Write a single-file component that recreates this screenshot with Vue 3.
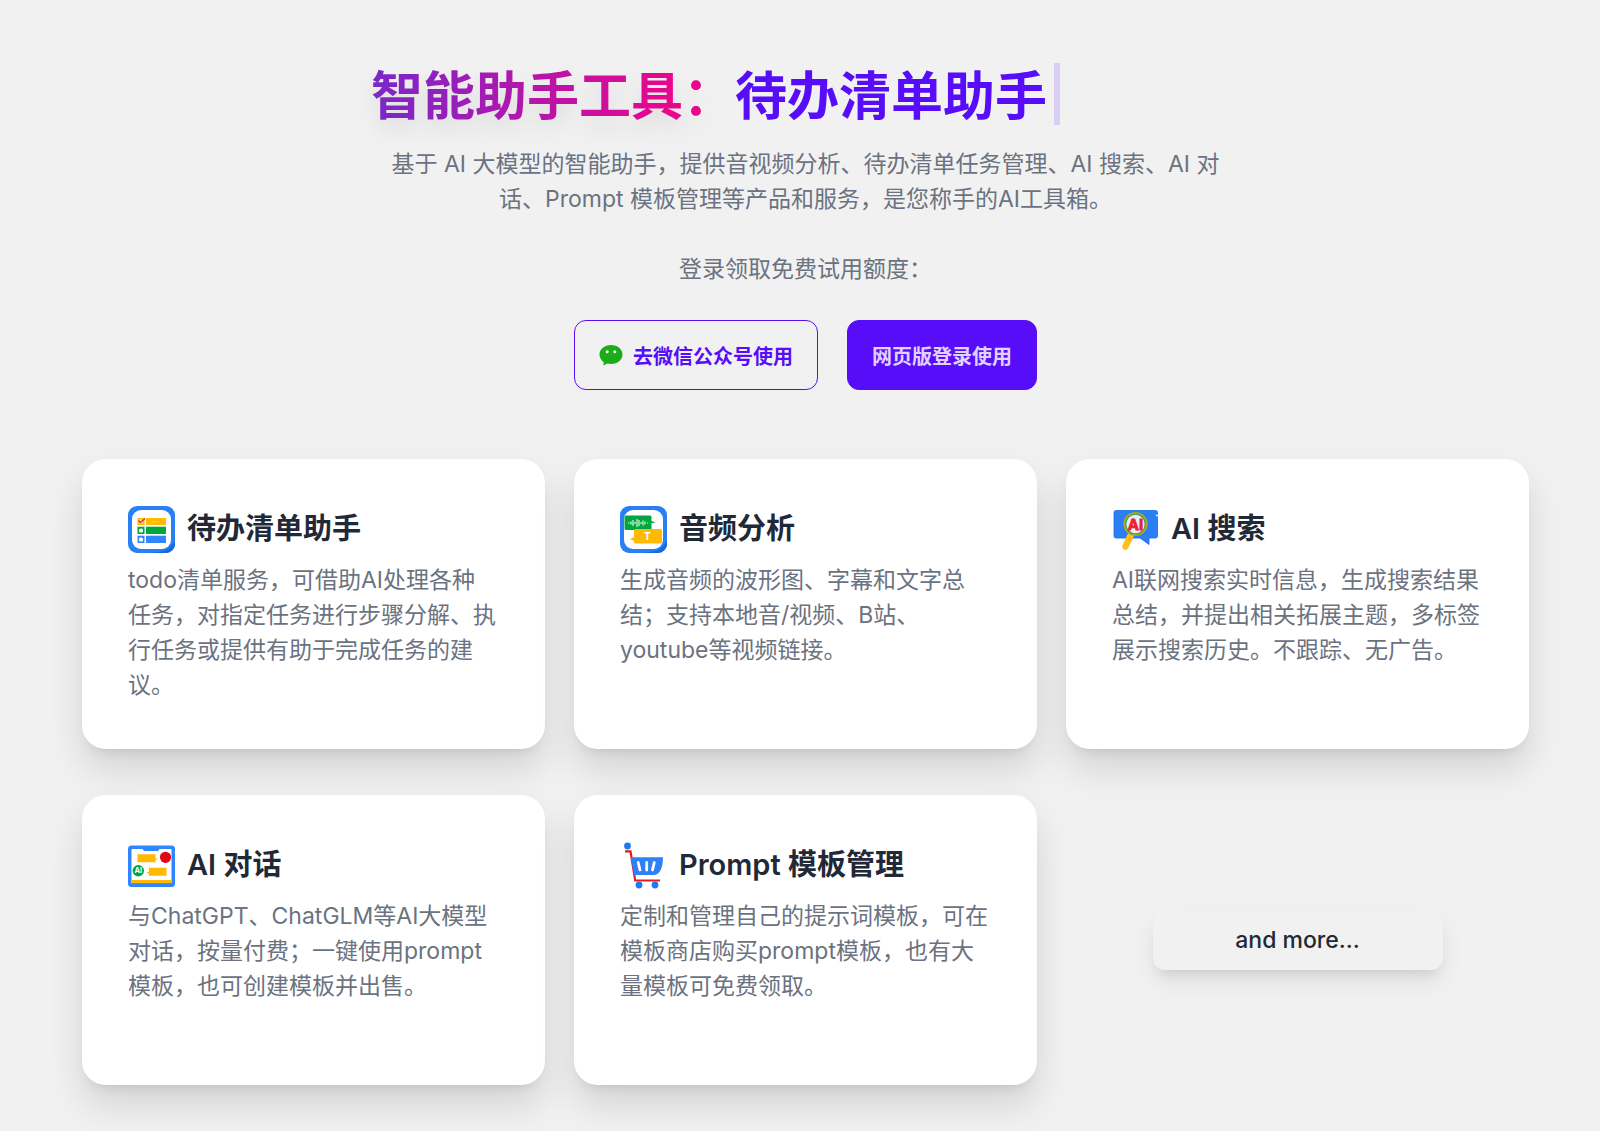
<script setup>
const products = [
  {
    id: 'todo',
    title: '待办清单助手',
    desc: 'todo清单服务，可借助AI处理各种任务，对指定任务进行步骤分解、执行任务或提供有助于完成任务的建议。'
  },
  {
    id: 'audio',
    title: '音频分析',
    desc: '生成音频的波形图、字幕和文字总结；支持本地音/视频、B站、youtube等视频链接。'
  },
  {
    id: 'search',
    title: 'AI 搜索',
    desc: 'AI联网搜索实时信息，生成搜索结果总结，并提出相关拓展主题，多标签展示搜索历史。不跟踪、无广告。'
  },
  {
    id: 'chat',
    title: 'AI 对话',
    desc: '与ChatGPT、ChatGLM等AI大模型对话，按量付费；一键使用prompt模板，也可创建模板并出售。'
  },
  {
    id: 'prompt',
    title: 'Prompt 模板管理',
    desc: '定制和管理自己的提示词模板，可在模板商店购买prompt模板，也有大量模板可免费领取。'
  }
];
</script>

<template>
  <main class="page">
    <header class="hero">
      <h1 class="hero-title">
        <span class="brand">智能助手工具：</span><span class="typed">待办清单助手</span><span class="cursor"></span>
      </h1>
      <p class="hero-desc">
        基于 AI 大模型的智能助手，提供音视频分析、待办清单任务管理、AI 搜索、AI 对话、Prompt 模板管理等产品和服务，是您称手的AI工具箱。<br /><br />登录领取免费试用额度：
      </p>
      <div class="actions">
        <button type="button" class="btn btn-outline">
          <svg class="btn-icon" viewBox="0 0 24 24" aria-hidden="true">
            <path fill="#1aad19" d="M12 2C5.4 2 .5 6.300.5 11.500c0 3.200 1.700 5.900 4.300 7.700L4.300 22.500l4-2c1.200.3 2.400.5 3.700.5 6.600 0 11.500-4.200 11.500-9.500S18.600 2 12 2z" />
            <circle cx="8.200" cy="8.800" r="1.500" fill="#fff" />
            <circle cx="15.800" cy="8.800" r="1.500" fill="#fff" />
          </svg>
          去微信公众号使用
        </button>
        <button type="button" class="btn btn-primary">网页版登录使用</button>
      </div>
    </header>

    <section class="products">
      <article v-for="item in products" :key="item.id" class="card">
        <div class="card-head">
          <svg class="card-icon" viewBox="0 0 47 47" aria-hidden="true">
            <template v-if="item.id === 'todo'">
              <rect width="47" height="47" rx="9" fill="#2b7ff5" />
              <path d="M47 34v4a9 9 0 0 1-9 9H14c20 0 28-2 33-13z" fill="#1668dc" />
              <rect x="4" y="4" width="39" height="39" rx="9" fill="#fff" />
              <g fill="#ffb900">
                <rect x="9.500" y="12" width="7" height="7" />
                <rect x="18" y="12" width="20" height="7" />
              </g>
              <g fill="#00a63e">
                <rect x="9.500" y="20.700" width="7" height="7.300" />
                <rect x="18" y="20.700" width="20" height="7.300" />
              </g>
              <g fill="#2f86ff">
                <rect x="9.500" y="29.700" width="7" height="7.300" />
                <rect x="18" y="29.700" width="20" height="7.300" />
              </g>
              <rect x="11" y="22.500" width="4" height="4" rx="1.500" fill="#fff" />
              <rect x="11" y="31.500" width="4" height="4" rx="1.500" fill="#fff" />
              <rect x="11" y="13.500" width="4" height="4" fill="#ffe9b0" />
              <path d="M10.500 14.500l2 2 4.500-4" fill="none" stroke="#e7332b" stroke-width="1.600" />
              <path d="M23.500 15.500h8" stroke="#ffda70" stroke-width="1" stroke-dasharray="2 .6" />
            </template>

            <template v-else-if="item.id === 'audio'">
              <rect width="47" height="47" rx="9" fill="#2b7ff5" />
              <path d="M47 34v4a9 9 0 0 1-9 9H14c20 0 28-2 33-13z" fill="#1668dc" />
              <rect x="4" y="4" width="39" height="39" rx="9" fill="#fff" />
              <path d="M6 9.500h24a1.500 1.500 0 0 1 1.500 1.500v4l4 1.500-4 .8v6.700H6a1.500 1.500 0 0 1-1.500-1.500V11A1.500 1.500 0 0 1 6 9.500z" fill="#00a63e" />
              <path d="M8 17h1.500M11 15.500v3M13 14v6M15 16v2M17 13v8M19 14v6M21 16v2M23 14.500v5M25 15.500v3M27 17h1" stroke="#d8f5e2" stroke-width="1.200" />
              <path d="M15.500 23h25a1.500 1.500 0 0 1 1.500 1.500v11.500a1.500 1.500 0 0 1-1.500 1.500h-25a1.500 1.500 0 0 1-1.500-1.500v-1.200l-4-1.500 4-2.300v-6.500a1.500 1.500 0 0 1 1.500-1.500z" fill="#ffb900" />
              <text x="27.500" y="34.400" class="icon-text" font-size="11" fill="#fff">T</text>
            </template>

            <template v-else-if="item.id === 'search'">
              <path d="M4 4.500h39.500a2 2 0 0 1 2 2V30a2 2 0 0 1-2 2h-6.500v6.500L28 32H4a2 2 0 0 1-2-2V6.500a2 2 0 0 1 2-2z" fill="#2b7ff5" stroke="#176ce0" stroke-width=".8" />
              <circle cx="45" cy="9.500" r="1" fill="#fff" />
              <path d="M18.500 29.500l-5 11" stroke="#ffbf1f" stroke-width="6.500" stroke-linecap="round" />
              <circle cx="23.500" cy="18" r="11" fill="#e9edf2" stroke="#b5a528" stroke-width="2.200" />
              <circle cx="23.500" cy="18" r="9.800" fill="none" stroke="#35a653" stroke-width="1.300" />
              <text x="23.500" y="23.500" class="icon-text" font-size="15" fill="#ee2030" stroke="#ee2030" stroke-width=".8">AI</text>
            </template>

            <template v-else-if="item.id === 'chat'">
              <rect y="3.500" width="47" height="41.500" rx="3.500" fill="#2f86ff" />
              <path d="M4.500 7h10l1.500 2h14l1.500-2h11a1 1 0 0 1 1 1v33h-40V8a1 1 0 0 1 1-1z" fill="#fff" />
              <rect x="3.500" y="38" width="40" height="3.200" fill="#ffb900" />
              <path d="M9.500 12.300h18v4l2.800.7-2.800 1v2.300h-18z" fill="#ffb900" />
              <path d="M21 25.700h17.500v8H21v-2l-3-1 3-1z" fill="#ffb900" />
              <circle cx="37.500" cy="15.300" r="5.600" fill="#e30613" />
              <circle cx="10.300" cy="28.700" r="5.700" fill="#00a63e" />
              <text x="10.300" y="31.400" class="icon-text" font-size="7.500" fill="#fff">AI</text>
            </template>

            <template v-else>
              <circle cx="7.500" cy="4" r="3.400" fill="#1f78ee" />
              <path d="M5 9.300h5.500l4.700 29.200H40" fill="none" stroke="#e31b23" stroke-width="2.200" />
              <path d="M10.700 15.200H43c-.2 6-.8 10-2.500 13-1.700 3.200-3.500 4.800-7 4.800H14z" fill="#2f80f7" />
              <path d="M18.200 20.500l1.800 7.500M26.700 20.500V28M34.300 20.500L32.500 28" stroke="#fff" stroke-width="2.800" stroke-linecap="round" />
              <circle cx="19" cy="43" r="3.400" fill="#1f78ee" />
              <circle cx="35" cy="43" r="3.400" fill="#1f78ee" />
            </template>
          </svg>
          <h2 class="card-title">{{ item.title }}</h2>
        </div>
        <p class="card-desc">{{ item.desc }}</p>
      </article>

      <div class="more">and more...</div>
    </section>
  </main>
</template>

<style>
body {
  margin: 0;
  background: #f1f1f1;
}
</style>

<style scoped>
* {
  box-sizing: border-box;
}

.page {
  min-height: 100vh;
  padding: 63px 71px 46px 82px;
  background: #f1f1f1;
  color: #1f2937;
  font-family: Inter, 'Noto Sans CJK SC', sans-serif;
}

.hero {
  max-width: 869px;
  margin: 0 auto 69px;
}

.hero-title {
  display: flex;
  align-items: flex-start;
  margin: 0 0 17px;
  font-size: 52px;
  font-weight: 700;
  line-height: 67px;
}

.brand {
  background: linear-gradient(90deg, #7928ca, #eb058c 84%);
  -webkit-background-clip: text;
  background-clip: text;
  color: transparent;
  filter: drop-shadow(0 12px 10px rgba(0, 0, 0, 0.08));
}

.typed {
  color: #570df8;
}

.cursor {
  width: 6px;
  height: 62px;
  margin-left: 7px;
  background: #dacdf6;
}

.hero-desc {
  margin: 0;
  padding: 0 12px;
  color: #6b7280;
  font-size: 23px;
  line-height: 35px;
  text-align: center;
}

.actions {
  display: flex;
  justify-content: center;
  gap: 29px;
  margin-top: 33px;
}

.btn {
  display: flex;
  align-items: center;
  gap: 10px;
  height: 70px;
  padding: 0 24px;
  border: 1px solid #570df8;
  border-radius: 12px;
  font-family: inherit;
  font-size: 20px;
  font-weight: 600;
  cursor: pointer;
}

.btn-outline {
  background: transparent;
  color: #570df8;
}

.btn-primary {
  background: #570df8;
  color: #e0d2fe;
}

.btn-icon {
  width: 24px;
  height: 24px;
}

.products {
  display: grid;
  grid-template-columns: repeat(3, 1fr);
  grid-auto-rows: 1fr;
  gap: 46px 29px;
}

.card {
  padding: 46px 48px 46px 46px;
  border-radius: 24px;
  background: #fff;
  box-shadow: 0 9px 12px -7px rgba(0, 0, 0, 0.1), 0 20px 36px rgba(0, 0, 0, 0.12);
}

.card-head {
  display: flex;
  align-items: center;
  gap: 12px;
  margin-bottom: 10px;
}

.card-icon {
  flex: none;
  width: 47px;
  height: 47px;
}

.icon-text {
  font-family: Inter, sans-serif;
  font-weight: 700;
  text-anchor: middle;
}

.card-title {
  margin: 0;
  font-size: 29px;
  font-weight: 600;
  line-height: 48px;
}

.card-desc {
  margin: 0;
  color: #6b7280;
  font-size: 23px;
  line-height: 35px;
}

.more {
  place-self: center;
  width: 290px;
  padding: 12px;
  border-radius: 12px;
  background: #f1f1f1;
  box-shadow: 0 9px 12px -6px rgba(0, 0, 0, 0.1), 0 12px 24px rgba(0, 0, 0, 0.07);
  font-size: 23px;
  font-weight: 500;
  line-height: 35px;
  text-align: center;
}
</style>
